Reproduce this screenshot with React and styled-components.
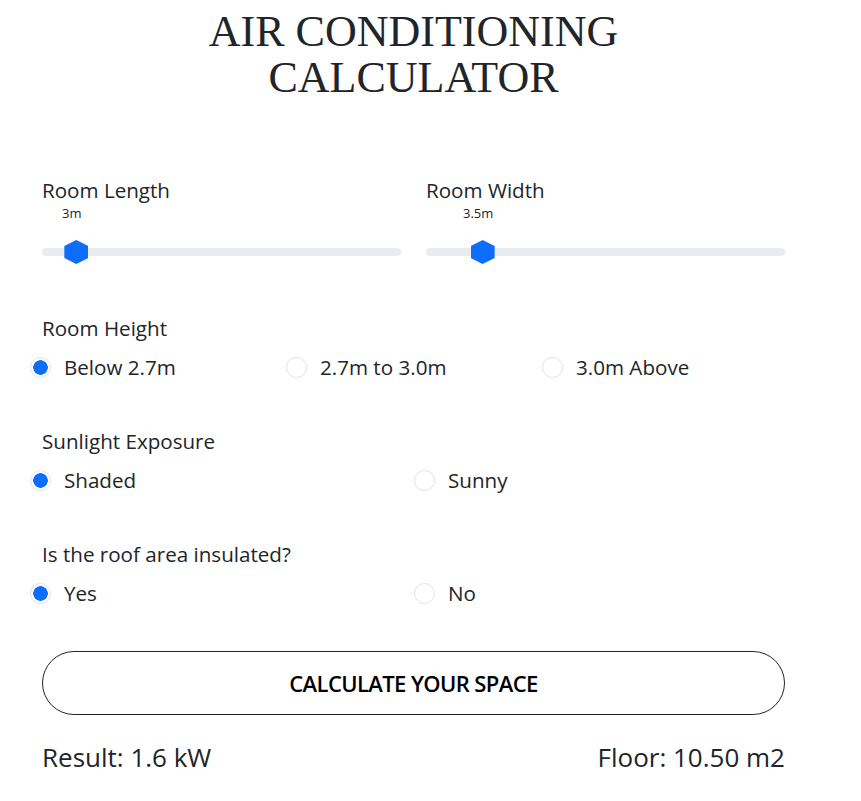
import React, { useState } from "react";
import styled, { createGlobalStyle } from "styled-components";

const GlobalStyle = createGlobalStyle`
    body {
        margin: 0;
        background: #ffffff;
        color: #212529;
        font-family: "Open Sans", "Noto Sans", sans-serif;
    }
`;

const MIN = 2.5;
const MAX = 10;

const heightOptions = ["Below 2.7m", "2.7m to 3.0m", "3.0m Above"];
const sunOptions = ["Shaded", "Sunny"];
const roofOptions = ["Yes", "No"];

const RangeField = ({ label, value }) => {
    const pct = (value - MIN) / (MAX - MIN);
    const left = `calc(12px + ${pct} * (100% - 24px))`;
    return (
        <Field>
            <FieldLabel>{label}</FieldLabel>
            <BubbleRow>
                <Bubble style={{ left }}>{value}m</Bubble>
            </BubbleRow>
            <TrackWrap>
                <Track />
                <Thumb style={{ left }} />
            </TrackWrap>
        </Field>
    );
};

const RadioGroup = ({ label, name, options, cols, value, onChange }) => (
    <Group>
        <FieldLabel>{label}</FieldLabel>
        <OptionRow $cols={cols}>
            {options.map((opt) => (
                <Option key={opt}>
                    <RadioInput
                        type="radio"
                        name={name}
                        checked={value === opt}
                        onChange={() => onChange(opt)}
                    />
                    {opt}
                </Option>
            ))}
        </OptionRow>
    </Group>
);

const App = () => {
    const [height, setHeight] = useState(heightOptions[0]);
    const [sun, setSun] = useState(sunOptions[0]);
    const [roof, setRoof] = useState(roofOptions[0]);
    const length = 3;
    const width = 3.5;

    return (
        <>
            <GlobalStyle />
            <Page>
                <Title>
                    AIR CONDITIONING
                    <br />
                    CALCULATOR
                </Title>

                <SliderRow>
                    <RangeField label="Room Length" value={length} />
                    <RangeField label="Room Width" value={width} />
                </SliderRow>

                <RadioGroup
                    label="Room Height"
                    name="height"
                    options={heightOptions}
                    cols={3}
                    value={height}
                    onChange={setHeight}
                />
                <RadioGroup
                    label="Sunlight Exposure"
                    name="sun"
                    options={sunOptions}
                    cols={2}
                    value={sun}
                    onChange={setSun}
                />
                <RadioGroup
                    label="Is the roof area insulated?"
                    name="roof"
                    options={roofOptions}
                    cols={2}
                    value={roof}
                    onChange={setRoof}
                />

                <CalcButton>CALCULATE YOUR SPACE</CalcButton>

                <ResultRow>
                    <span>Result: 1.6 kW</span>
                    <span>Floor: {(length * width).toFixed(2)} m2</span>
                </ResultRow>
            </Page>
        </>
    );
};

export default App;

const Page = styled.div`
    width: 743px;
    padding: 9px 0 20px 42px;
`;

const Title = styled.h1`
    margin: 0;
    text-align: center;
    font-family: "Liberation Serif", "Times New Roman", serif;
    font-weight: 400;
    font-size: 44px;
    line-height: 46px;
    color: #212529;
`;

const SliderRow = styled.div`
    display: grid;
    grid-template-columns: 1fr 1fr;
    column-gap: 25px;
    margin-top: 74px;
`;

const Field = styled.div`
    display: flex;
    flex-direction: column;
`;

const FieldLabel = styled.div`
    font-size: 20.6px;
    line-height: 30px;
`;

const BubbleRow = styled.div`
    position: relative;
    height: 16px;
`;

const Bubble = styled.span`
    position: absolute;
    top: 0;
    transform: translateX(calc(-50% - 4.5px));
    font-size: 13px;
    line-height: 16px;
    white-space: nowrap;
`;

const TrackWrap = styled.div`
    position: relative;
    height: 24px;
    margin-top: 19px;
    display: flex;
    align-items: center;
`;

const Track = styled.div`
    width: 100%;
    height: 8px;
    border-radius: 4px;
    background: #e9ecef;
`;

const Thumb = styled.div`
    position: absolute;
    top: 0;
    width: 24px;
    height: 24px;
    transform: translateX(-50%);
    background: #0d6efd;
    clip-path: polygon(50% 0, 100% 25%, 100% 75%, 50% 100%, 0 75%, 0 25%);
`;

const Group = styled.div`
    margin-top: 49px;

    & + & {
        margin-top: 44px;
    }
`;

const OptionRow = styled.div`
    display: grid;
    grid-template-columns: repeat(${(p) => p.$cols}, ${(p) => 768 / p.$cols}px);
    margin-top: 9px;
    margin-left: -12px;
`;

const Option = styled.label`
    display: flex;
    align-items: center;
    gap: 13px;
    font-size: 20.6px;
    line-height: 30px;
    cursor: pointer;
`;

const RadioInput = styled.input`
    appearance: none;
    margin: 0;
    width: 21px;
    height: 21px;
    border-radius: 50%;
    border: 1px solid #dee2e6;
    background: #ffffff;
    cursor: pointer;

    &:checked {
        background: radial-gradient(circle, #0d6efd 0 7px, #ffffff 7.5px);
    }
`;

const CalcButton = styled.button`
    display: block;
    width: 100%;
    height: 64px;
    margin-top: 43px;
    border: 1px solid #212529;
    border-radius: 32px;
    background: #ffffff;
    color: #000000;
    font-family: "Open Sans", "Noto Sans", sans-serif;
    font-size: 22px;
    font-weight: 600;
    letter-spacing: -0.6px;
    cursor: pointer;
`;

const ResultRow = styled.div`
    display: flex;
    justify-content: space-between;
    margin-top: 24px;
    font-size: 26px;
    line-height: 36px;
`;
